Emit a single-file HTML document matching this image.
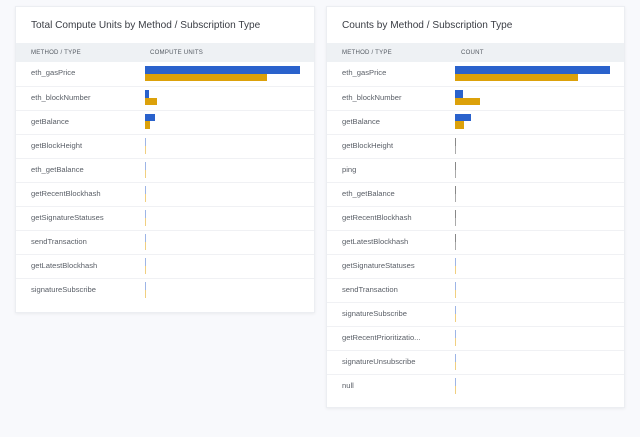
<!DOCTYPE html>
<html><head><style>
*{margin:0;padding:0;box-sizing:border-box}
body{width:640px;height:437px;background:#f8f9fc;font-family:"Liberation Sans",sans-serif;position:relative;overflow:hidden}
.p{position:absolute;background:#fff;border:1px solid #eceef2;box-shadow:0 1px 3px rgba(0,0,0,.06)}
.t{position:absolute;left:15px;top:13px;font-size:10.1px;color:#3a3d44}
.h{position:absolute;left:0;right:0;top:36px;height:19px;background:#eef1f4;font-size:6.1px;color:#555b63;letter-spacing:.2px}
.h span{position:absolute;top:6px}
.r{position:absolute;left:0;right:0;height:24px;border-top:1px solid #f0f1f4;font-size:7.6px;color:#5b6068}
.r .n{position:absolute;left:15px;top:6px}
.b{position:absolute;background:#2a62cc}
.o{position:absolute;background:#dca10a}
.tb{position:absolute;width:1px;height:8px;background:#9db5e6;top:3px}
.to{position:absolute;width:1px;height:8px;background:#f0cf80;top:11px}
</style></head><body>
<div class="p" style="left:15px;top:6px;width:300px;height:307px">
<div class="t">Total Compute Units by Method / Subscription Type</div>
<div class="h"><span style="left:15px">METHOD / TYPE</span><span style="left:134px">COMPUTE UNITS</span></div>
<div class="r" style="top:55px;border-top:none"><span class="n">eth_gasPrice</span><div class="b" style="left:129px;top:4px;width:155px;height:8px"></div><div class="o" style="left:129px;top:12px;width:122px;height:7px"></div></div>
<div class="r" style="top:79px"><span class="n">eth_blockNumber</span><div class="b" style="left:129px;top:3px;width:4px;height:8px"></div><div class="o" style="left:129px;top:11px;width:12px;height:7px"></div></div>
<div class="r" style="top:103px"><span class="n">getBalance</span><div class="b" style="left:129px;top:3px;width:10px;height:7px"></div><div class="o" style="left:129px;top:10px;width:5px;height:8px"></div></div>
<div class="r" style="top:127px"><span class="n">getBlockHeight</span><div class="tb" style="left:129px"></div><div class="to" style="left:129px"></div></div>
<div class="r" style="top:151px"><span class="n">eth_getBalance</span><div class="tb" style="left:129px"></div><div class="to" style="left:129px"></div></div>
<div class="r" style="top:175px"><span class="n">getRecentBlockhash</span><div class="tb" style="left:129px"></div><div class="to" style="left:129px"></div></div>
<div class="r" style="top:199px"><span class="n">getSignatureStatuses</span><div class="tb" style="left:129px"></div><div class="to" style="left:129px"></div></div>
<div class="r" style="top:223px"><span class="n">sendTransaction</span><div class="tb" style="left:129px"></div><div class="to" style="left:129px"></div></div>
<div class="r" style="top:247px"><span class="n">getLatestBlockhash</span><div class="tb" style="left:129px"></div><div class="to" style="left:129px"></div></div>
<div class="r" style="top:271px"><span class="n">signatureSubscribe</span><div class="tb" style="left:129px"></div><div class="to" style="left:129px"></div></div>
</div>
<div class="p" style="left:326px;top:6px;width:299px;height:402px">
<div class="t">Counts by Method / Subscription Type</div>
<div class="h"><span style="left:15px">METHOD / TYPE</span><span style="left:134px">COUNT</span></div>
<div class="r" style="top:55px;border-top:none"><span class="n">eth_gasPrice</span><div class="b" style="left:128px;top:4px;width:155px;height:8px"></div><div class="o" style="left:128px;top:12px;width:123px;height:7px"></div></div>
<div class="r" style="top:79px"><span class="n">eth_blockNumber</span><div class="b" style="left:128px;top:3px;width:8px;height:8px"></div><div class="o" style="left:128px;top:11px;width:25px;height:7px"></div></div>
<div class="r" style="top:103px"><span class="n">getBalance</span><div class="b" style="left:128px;top:3px;width:16px;height:7px"></div><div class="o" style="left:128px;top:10px;width:9px;height:8px"></div></div>
<div class="r" style="top:127px"><span class="n">getBlockHeight</span><div class="tb" style="left:128px;background:#888"></div><div class="to" style="left:128px;background:#aaa"></div></div>
<div class="r" style="top:151px"><span class="n">ping</span><div class="tb" style="left:128px;background:#888"></div><div class="to" style="left:128px;background:#aaa"></div></div>
<div class="r" style="top:175px"><span class="n">eth_getBalance</span><div class="tb" style="left:128px;background:#888"></div><div class="to" style="left:128px;background:#aaa"></div></div>
<div class="r" style="top:199px"><span class="n">getRecentBlockhash</span><div class="tb" style="left:128px;background:#888"></div><div class="to" style="left:128px;background:#aaa"></div></div>
<div class="r" style="top:223px"><span class="n">getLatestBlockhash</span><div class="tb" style="left:128px;background:#888"></div><div class="to" style="left:128px;background:#aaa"></div></div>
<div class="r" style="top:247px"><span class="n">getSignatureStatuses</span><div class="tb" style="left:128px"></div><div class="to" style="left:128px"></div></div>
<div class="r" style="top:271px"><span class="n">sendTransaction</span><div class="tb" style="left:128px"></div><div class="to" style="left:128px"></div></div>
<div class="r" style="top:295px"><span class="n">signatureSubscribe</span><div class="tb" style="left:128px"></div><div class="to" style="left:128px"></div></div>
<div class="r" style="top:319px"><span class="n">getRecentPrioritizatio...</span><div class="tb" style="left:128px"></div><div class="to" style="left:128px"></div></div>
<div class="r" style="top:343px"><span class="n">signatureUnsubscribe</span><div class="tb" style="left:128px"></div><div class="to" style="left:128px"></div></div>
<div class="r" style="top:367px"><span class="n">null</span><div class="tb" style="left:128px"></div><div class="to" style="left:128px"></div></div>
</div>
</body></html>
